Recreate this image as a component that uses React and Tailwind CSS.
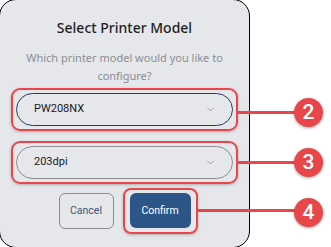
import { ChevronDown } from "lucide-react";

function Marker({ n, top }) {
  return (
    <div
      className="absolute left-[294px] w-[29px] h-[29px] rounded-full bg-[#e8464b] flex items-center justify-center text-white text-[21px] font-medium shadow-[0_1px_3px_rgba(0,0,0,0.35)]"
      style={{ top }}
    >
      {n}
    </div>
  );
}

function Select({ value, active }) {
  return (
    <div className="relative">
      <div
        className={`h-[33px] rounded-full flex items-center justify-between pl-[17px] pr-[16px] ${
          active ? "border-[1.5px] border-[#243f63]" : "border border-[#8a8c90]"
        }`}
      >
        <span className="text-[11px] text-[#1a1a1a]">{value}</span>
        <ChevronDown size={11} strokeWidth={1.2} className="text-[#666]" />
      </div>
      {/* annotation box */}
      <div className="absolute -inset-[5px] border-[2.5px] border-[#e8464b] rounded-[9px] shadow-[0_1px_3px_rgba(0,0,0,0.25)] pointer-events-none" />
    </div>
  );
}

export default function App() {
  return (
    <div className="relative w-[331px] h-[247px] bg-white overflow-hidden font-['Roboto',sans-serif]">
      <div className="-ml-px -mt-px w-[251px] h-[249px] rounded-[17px] border border-black bg-[#e6e7eb] flex flex-col items-center pt-[18px] px-[16px]">
        <h2 className="text-[14px] leading-[20px] font-medium text-[#1f1f1f] font-['Noto_Sans',sans-serif]">
          Select Printer Model
        </h2>
        <p className="mt-[11px] text-[11px] leading-[18px] text-[#8b8e94] text-center font-['Noto_Sans',sans-serif]">
          Which printer model would you like to
          <br />
          configure?
        </p>

        <div className="w-full mt-[8px]">
          <Select value="PW208NX" active />
        </div>
        <div className="w-full mt-[20px]">
          <Select value="203dpi" />
        </div>

        <div className="flex gap-[16px] mt-[14px]">
          <button className="w-[55px] h-[36px] rounded-[6px] border border-[#8a8c90] text-[10.5px] text-[#3b5678]">
            Cancel
          </button>
          <div className="relative">
            <button className="w-[61px] h-[35px] rounded-[6px] bg-[#2d5688] text-[10.5px] text-white">
              Confirm
            </button>
            <div className="absolute -inset-x-[7px] -inset-y-[5px] border-[2.5px] border-[#e8464b] rounded-[8px] shadow-[0_1px_3px_rgba(0,0,0,0.25)] pointer-events-none" />
          </div>
        </div>
      </div>

      {/* annotation leaders */}
      <div className="absolute left-[238px] top-[111px] w-[60px] h-[2.5px] bg-[#e8464b]" />
      <div className="absolute left-[238px] top-[161px] w-[60px] h-[2.5px] bg-[#e8464b]" />
      <div className="absolute left-[198px] top-[209px] w-[100px] h-[2.5px] bg-[#e8464b]" />
      <Marker n="2" top={98} />
      <Marker n="3" top={148} />
      <Marker n="4" top={198} />
    </div>
  );
}
